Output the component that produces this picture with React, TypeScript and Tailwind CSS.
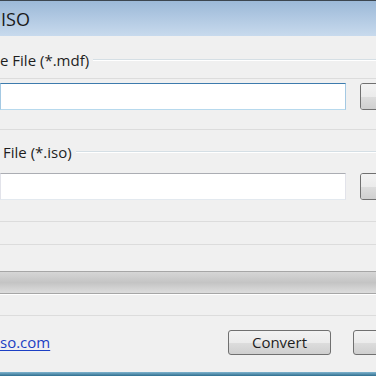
import React from 'react';

// Thin etched separator line, spans the full width
const Rule = () => <div className="h-px bg-[#dcdcdc]" />;

const BrowseButton = () => (
  <div className="w-[30px] h-[27px] shrink-0 rounded-[3px] border border-[#707070] overflow-hidden flex flex-col">
    <div className="h-1/2 bg-gradient-to-b from-[#f3f3f3] to-[#ebebeb]" />
    <div className="h-1/2 bg-gradient-to-b from-[#dddddd] to-[#cfcfcf]" />
  </div>
);

const GroupLabel = ({ text, indent }: { text: string; indent: string }) => (
  <div className={`flex items-center h-5 ${indent}`}>
    <span className="text-[15px] leading-5 text-[#1e1e1e] whitespace-nowrap">{text}</span>
    <div className="flex-1 ml-[4px] flex flex-col">
      <div className="h-px bg-[#d5dfe5]" />
      <div className="h-px bg-white" />
    </div>
  </div>
);

export default function App() {
  return (
    <div className="w-[376px] h-[376px] overflow-hidden bg-[#f0f0f0] flex flex-col font-['Open_Sans','Noto_Sans',sans-serif]">
      {/* Window frame top */}
      <div className="h-px bg-[#3c4650]" />
      {/* Title bar */}
      <div className="h-[35px] bg-gradient-to-b from-[#9cb9d8] to-[#c8daed] flex items-center pl-px">
        <span className="text-[18px] text-[#1a1a1a] leading-none">ISO</span>
      </div>

      {/* Source group */}
      <div className="h-[14px]" />
      <GroupLabel text="e File (*.mdf)" indent="" />
      <div className="h-[8px]" />
      <Rule />
      <div className="h-[4px]" />
      <div className="h-[27px] flex items-center">
        <div className="w-[346px] h-[27px] shrink-0 bg-white border border-[#a4c9e3] border-t-[#3d7bad] border-b-[#b7d9ed]" />
        <div className="w-[14px] shrink-0" />
        <BrowseButton />
      </div>
      <div className="h-[19px]" />
      <Rule />

      {/* Output group */}
      <div className="h-[12px]" />
      <GroupLabel text="File (*.iso)" indent="pl-[3px]" />
      <div className="h-[11px]" />
      <div className="h-[27px] flex items-center">
        <div className="w-[346px] h-[27px] shrink-0 bg-white border border-[#e2e3ea] border-t-[#abadb3] border-b-[#e3e9ef]" />
        <div className="w-[14px] shrink-0" />
        <BrowseButton />
      </div>
      <div className="h-[21px]" />
      <Rule />
      <div className="h-[22px]" />
      <Rule />
      <div className="h-[26px]" />

      {/* Progress bar */}
      <div className="h-[23px] border-y border-[#a6a6a6] bg-gradient-to-b from-[#d6d6d6] via-[#c4c4c4] to-[#dddddd]" />
      <div className="h-px bg-white" />
      <div className="h-[20px]" />
      <Rule />

      {/* Footer */}
      <div className="h-[14px]" />
      <div className="h-[25px] flex items-center">
        <a className="text-[15px] leading-none text-[#1c3fc4] underline underline-offset-2 whitespace-nowrap">so.com</a>
        <div className="flex-1" />
        <button className="w-[103px] h-[25px] shrink-0 rounded-[3px] border border-[#707070] bg-[linear-gradient(to_bottom,#f2f2f2_0%,#ebebeb_50%,#dddddd_50%,#cfcfcf_100%)] text-[15px] text-[#1e1e1e] leading-none">
          Convert
        </button>
        <div className="w-[22px] shrink-0" />
        <div className="w-[30px] h-[25px] shrink-0 rounded-[3px] border border-[#707070] bg-[linear-gradient(to_bottom,#f2f2f2_0%,#ebebeb_50%,#dddddd_50%,#cfcfcf_100%)] -mr-[7px]" />
      </div>
      <div className="flex-1" />
      {/* Window frame bottom */}
      <div className="h-[4px] bg-gradient-to-b from-[#7fb4cf] to-[#2f6f8f]" />
    </div>
  );
}
